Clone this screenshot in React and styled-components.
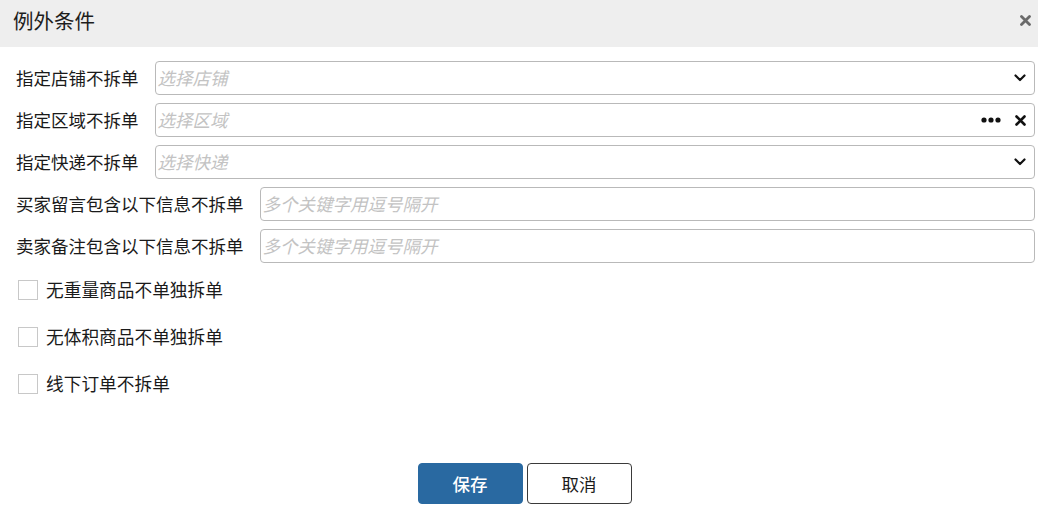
import React from "react";
import styled, { createGlobalStyle } from "styled-components";

const Global = createGlobalStyle`
  html, body { margin: 0; padding: 0; background: #fff; }
  body { font-family: "Noto Sans CJK SC", "Noto Sans", sans-serif; color: #222; }
  * { box-sizing: border-box; }
`;

const Dialog = styled.div`
  width: 1038px;
  height: 516px;
  background: #fff;
  display: flex;
  flex-direction: column;
`;

const Header = styled.div`
  height: 47px;
  background: #eeeeee;
  display: flex;
  align-items: center;
  justify-content: space-between;
  padding: 0 3px 0 13px;
`;

const Title = styled.h1`
  margin: 0;
  font-size: 20.5px;
  font-weight: 400;
  line-height: 1;
  color: #1d1d1d;
  transform: translateY(-3px);
`;

const CloseBtn = styled.button`
  border: 0;
  background: transparent;
  padding: 4px;
  display: flex;
  cursor: pointer;
  transform: translateY(-3px);
`;

const Body = styled.div`
  padding: 14px 3px 0 16px;
  display: flex;
  flex-direction: column;
`;

const Fields = styled.div`
  display: flex;
  flex-direction: column;
  gap: 8px;
`;

const FieldRow = styled.div`
  display: flex;
  align-items: center;
  height: 34px;
`;

const Label = styled.label`
  font-size: 17.5px;
  line-height: 1;
  color: #1a1a1a;
  white-space: nowrap;
  margin-right: 16px;
`;

const InputBox = styled.div`
  flex: 1;
  height: 34px;
  border: 1px solid #b9b9b9;
  border-radius: 4px;
  display: flex;
  align-items: center;
  padding: 0 8px 0 2px;
`;

const Placeholder = styled.span`
  flex: 1;
  font-size: 17.5px;
  font-style: italic;
  color: #c3c3c3;
  line-height: 1;
`;

const IconGroup = styled.div`
  display: flex;
  align-items: center;
  gap: 14px;
`;

const Checks = styled.div`
  margin-top: 3px;
  display: flex;
  flex-direction: column;
`;

const CheckRow = styled.label`
  display: flex;
  align-items: center;
  height: 47px;
  padding-left: 2px;
`;

const Box = styled.span`
  width: 20px;
  height: 20px;
  border: 1px solid #c8c8c8;
  background: #fff;
  margin-right: 8px;
  flex-shrink: 0;
`;

const CheckText = styled.span`
  font-size: 17.7px;
  line-height: 1;
  color: #1a1a1a;
`;

const Footer = styled.div`
  margin-top: 56px;
  display: flex;
  justify-content: center;
  gap: 4px;
  padding-right: 2px;
`;

const Button = styled.button`
  width: 105px;
  height: 41px;
  border-radius: 4px;
  font-family: inherit;
  font-size: 17.5px;
  line-height: 1;
  cursor: pointer;
  border: 1px solid ${(p) => (p.$primary ? "#2969a1" : "#3a3a3a")};
  background: ${(p) => (p.$primary ? "#2969a1" : "#fff")};
  color: ${(p) => (p.$primary ? "#fff" : "#1a1a1a")};
  font-weight: ${(p) => (p.$primary ? 500 : 400)};
`;

const Chevron = () => (
  <svg width="12" height="8" viewBox="0 0 12 8">
    <path d="M1.5 1.5 L6 6 L10.5 1.5" fill="none" stroke="#111" strokeWidth="2.2" strokeLinecap="round" strokeLinejoin="round" />
  </svg>
);

const Cross = ({ color = "#111", size = 11, w = 2.6 }) => (
  <svg width={size} height={size} viewBox="0 0 11 11">
    <path d="M1.5 1.5 L9.5 9.5 M9.5 1.5 L1.5 9.5" stroke={color} strokeWidth={w} strokeLinecap="round" />
  </svg>
);

const Dots = () => (
  <svg width="20" height="6" viewBox="0 0 20 6">
    <circle cx="3" cy="3" r="2.6" fill="#111" />
    <circle cx="10" cy="3" r="2.6" fill="#111" />
    <circle cx="17" cy="3" r="2.6" fill="#111" />
  </svg>
);

const fields = [
  { label: "指定店铺不拆单", ph: "选择店铺", kind: "select" },
  { label: "指定区域不拆单", ph: "选择区域", kind: "picker" },
  { label: "指定快递不拆单", ph: "选择快递", kind: "select" },
  { label: "买家留言包含以下信息不拆单", ph: "多个关键字用逗号隔开" },
  { label: "卖家备注包含以下信息不拆单", ph: "多个关键字用逗号隔开" },
];

const checks = ["无重量商品不单独拆单", "无体积商品不单独拆单", "线下订单不拆单"];

export default function App() {
  return (
    <>
      <Global />
      <Dialog>
        <Header>
          <Title>例外条件</Title>
          <CloseBtn aria-label="close">
            <Cross color="#6a6a6a" size={11} w={2.8} />
          </CloseBtn>
        </Header>
        <Body>
          <Fields>
            {fields.map((f) => (
              <FieldRow key={f.label}>
                <Label>{f.label}</Label>
                <InputBox>
                  <Placeholder>{f.ph}</Placeholder>
                  {f.kind === "select" && <Chevron />}
                  {f.kind === "picker" && (
                    <IconGroup>
                      <Dots />
                      <Cross />
                    </IconGroup>
                  )}
                </InputBox>
              </FieldRow>
            ))}
          </Fields>
          <Checks>
            {checks.map((c) => (
              <CheckRow key={c}>
                <Box />
                <CheckText>{c}</CheckText>
              </CheckRow>
            ))}
          </Checks>
          <Footer>
            <Button $primary>保存</Button>
            <Button>取消</Button>
          </Footer>
        </Body>
      </Dialog>
    </>
  );
}
